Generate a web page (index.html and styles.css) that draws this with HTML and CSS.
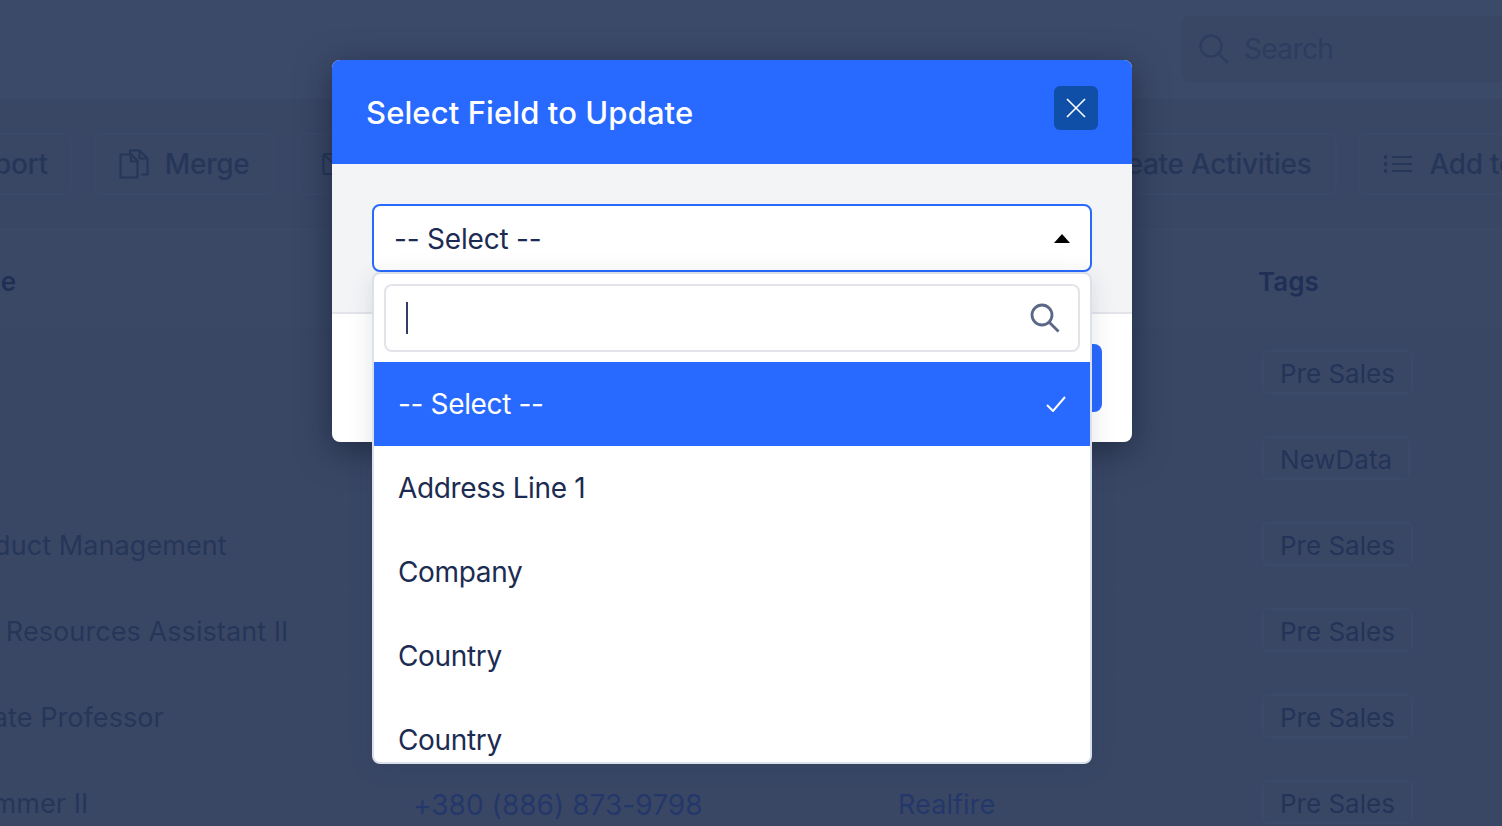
FILE: index.html
```html
<!DOCTYPE html>
<html lang="en">
<head>
  <meta charset="UTF-8">
  <title>Select Field to Update</title>
  <link rel="stylesheet" href="styles.css">
</head>
<body>
  <div class="page">
    <header class="topbar">
      <div class="search-box">
        <svg class="search-icon" viewBox="0 0 30 30"><circle cx="12" cy="12" r="10.5"/><path d="M19.5 19.5l9.5 9.5"/></svg>
        <span>Search</span>
      </div>
    </header>

    <div class="toolbar">
      <div class="tool-group">
        <div class="tool-btn tool-export">Export</div>
        <div class="tool-btn">
          <svg class="tool-icon" viewBox="0 0 30 30"><path d="M1.5 5.5h11l6 6.5v16.500H1.500z"/><path d="M12 5.500v7h6.500"/><path d="M11 5V1.500h9.500l8 8v16h-6"/><path d="M20.500 1.500v8h8"/></svg>
          <span>Merge</span>
        </div>
        <div class="tool-btn">
          <svg class="tool-icon" viewBox="0 0 30 24"><rect x="1.5" y="2" width="27" height="20" rx="2"/><path d="M2 3l13 11L28 3"/></svg>
          <span>Email</span>
        </div>
      </div>
      <div class="tool-group tool-group-right">
        <div class="tool-btn">Create Activities</div>
        <div class="tool-btn">
          <svg class="tool-icon" viewBox="0 0 30 18"><path d="M9 2h20M9 9h20M9 16h20"/><path class="dots" d="M1 2h3M1 9h3M1 16h3"/></svg>
          <span>Add to List</span>
        </div>
      </div>
    </div>

    <div class="table">
      <div class="row row-head">
        <div>Job Title</div><div>Phone</div><div>Company</div><div>Tags</div>
      </div>
      <div class="row">
        <div></div><div></div><div></div><div><span class="tag">Pre Sales</span></div>
      </div>
      <div class="row">
        <div></div><div></div><div></div><div><span class="tag">NewData</span></div>
      </div>
      <div class="row">
        <div>VP Product Management</div><div></div><div></div><div><span class="tag">Pre Sales</span></div>
      </div>
      <div class="row">
        <div>Human Resources Assistant II</div><div></div><div></div><div><span class="tag">Pre Sales</span></div>
      </div>
      <div class="row">
        <div>Associate Professor</div><div></div><div></div><div><span class="tag">Pre Sales</span></div>
      </div>
      <div class="row">
        <div>Programmer II</div><div class="link phone">+380 (886) 873-9798</div><div class="link">Realfire</div><div><span class="tag">Pre Sales</span></div>
      </div>
    </div>
  </div>

  <div class="modal">
    <div class="modal-header">
      <h2>Select Field to Update</h2>
      <button class="close-btn" type="button">
        <svg viewBox="0 0 20 20"><path d="M1 1l18 18M19 1L1 19"/></svg>
      </button>
    </div>
    <div class="modal-body">
      <div class="select-box">
        <span>-- Select --</span>
        <i class="caret-up"></i>
      </div>
    </div>
    <div class="modal-footer">
      <button class="update-btn" type="button">Update</button>
    </div>

    <div class="dropdown">
      <div class="dropdown-search">
        <i class="text-cursor"></i>
        <svg viewBox="0 0 30 30"><circle cx="12" cy="12" r="10"/><path d="M19.5 19.5l9 9"/></svg>
      </div>
      <ul class="options">
        <li class="selected">
          <span>-- Select --</span>
          <svg viewBox="0 0 20 16"><path d="M1 9l6 6L19 1"/></svg>
        </li>
        <li>Address Line 1</li>
        <li>Company</li>
        <li>Country</li>
        <li>Country</li>
      </ul>
    </div>
  </div>
</body>
</html>
```

FILE: styles.css
```css
* {
  box-sizing: border-box;
}
html, body {
  height: 100%;
}
body {
  margin: 0;
  overflow: hidden;
  font-family: Inter, "Liberation Sans", sans-serif;
  background-color: #394765;
  color: #243358;
}
.page {
  height: 826px;
  overflow: hidden;
}

/* background page, dimmed */
.topbar {
  height: 101px;
  padding: 16px 0 0 1182px;
  background: #3c4a69;
  border-bottom: 2px solid #394765;
}
.search-box {
  display: flex;
  align-items: center;
  width: 340px;
  height: 66px;
  padding: 0 0 0 17px;
  border-radius: 8px;
  background: #394765;
  color: #2d3c5f;
  font-size: 28px;
  letter-spacing: -0.6px;
}
.search-icon {
  width: 30px;
  height: 30px;
  margin-right: 15px;
  fill: none;
  stroke: #2d3c5f;
  stroke-width: 2.4;
}
.toolbar {
  display: flex;
  justify-content: space-between;
  height: 129px;
  padding-top: 32px;
  background: #394765;
  border-bottom: 2px solid #3b4967;
}
.tool-group {
  display: flex;
  gap: 22px;
  margin-left: -64px;
}
.tool-group-right {
  gap: 21px;
  margin-left: 0;
  margin-right: -93px;
}
.tool-btn {
  display: flex;
  align-items: center;
  height: 62px;
  padding: 0 24px;
  border: 2px solid #3b4968;
  border-radius: 8px;
  font-size: 28px;
  font-weight: 500;
  letter-spacing: -0.3px;
  color: #263659;
  white-space: nowrap;
}
.tool-export {
  padding-right: 22px;
}
.tool-icon {
  width: 30px;
  height: 30px;
  margin: 0 16px 0 -1px;
  fill: none;
  stroke: #263659;
  stroke-width: 2.1;
}
.tool-icon .dots {
  stroke-width: 3.4;
}
.table {
  background: #394765;
}
.row {
  display: grid;
  grid-template-columns: 505px 486px 364px 1fr;
  align-items: center;
  height: 86px;
  margin-left: -93px;
  border-bottom: 2px solid #3a4866;
  font-size: 27px;
  letter-spacing: 0.08px;
  color: #263659;
  white-space: nowrap;
}
.row-head {
  height: 101px;
  padding-top: 4px;
  background: #3a4866;
  border-bottom: 2px solid #384664;
  font-size: 26px;
  font-weight: 600;
  letter-spacing: 0;
  color: #1f2f55;
}
.row-head > div:last-child {
  margin-left: -4px;
}
.row > .link {
  padding-top: 2px;
  color: #24376a;
}
.row > .phone {
  padding: 4px 0 0 1px;
  font-size: 28px;
  letter-spacing: 0.05px;
}
.tag {
  display: inline-block;
  height: 44px;
  margin-bottom: 2px;
  padding: 0 16px;
  border: 2px solid #3c4a69;
  border-radius: 6px;
  line-height: 44px;
  font-size: 26px;
  letter-spacing: 0;
  color: #243358;
}

/* dialog */
.modal {
  position: absolute;
  top: 60px;
  left: 332px;
  width: 800px;
  height: 382px;
  border-radius: 8px;
  background: #fff;
  box-shadow: 0 8px 34px rgba(15, 23, 42, 0.55);
}
.modal-header {
  display: flex;
  align-items: center;
  justify-content: space-between;
  height: 104px;
  padding: 0 34px;
  background: #2869ff;
  border-radius: 8px 8px 0 0;
}
.modal-header h2 {
  margin: 0;
  font-size: 31px;
  font-weight: 500;
  letter-spacing: 0.1px;
  color: #fff;
}
.close-btn {
  display: flex;
  align-items: center;
  justify-content: center;
  width: 44px;
  height: 44px;
  margin-bottom: 8px;
  padding: 0;
  border: none;
  border-radius: 6px;
  background: #0f4fa8;
}
.close-btn svg {
  width: 20px;
  height: 20px;
  fill: none;
  stroke: #fff;
  stroke-width: 1.6;
}
.modal-body {
  height: 150px;
  padding: 40px 40px 0;
  background: #f3f4f6;
  border-bottom: 2px solid #e2e4ea;
}
.select-box {
  display: flex;
  align-items: center;
  justify-content: space-between;
  height: 68px;
  padding: 1px 20px 0;
  background: #fff;
  border: 2px solid #2869ff;
  border-radius: 8px;
  font-size: 28px;
  letter-spacing: -0.2px;
  color: #1c2b52;
}
.caret-up {
  width: 0;
  height: 0;
  margin-bottom: 1px;
  border-left: 8px solid transparent;
  border-right: 8px solid transparent;
  border-bottom: 9px solid #000;
}
.modal-footer {
  display: flex;
  justify-content: flex-end;
  padding: 30px 30px 0;
}
.update-btn {
  width: 150px;
  height: 68px;
  border: none;
  border-radius: 8px;
  background: #2869ff;
  color: #fff;
  font: 500 28px Inter, sans-serif;
}
.dropdown {
  position: absolute;
  top: 212px;
  left: 40px;
  width: 720px;
  height: 492px;
  overflow: hidden;
  background: #fff;
  border: 2px solid #dbe1ea;
  border-radius: 8px;
  box-shadow: 0 4px 24px rgba(30, 41, 70, 0.12);
}
.dropdown-search {
  display: flex;
  align-items: center;
  justify-content: space-between;
  height: 68px;
  margin: 10px;
  padding: 0 18px 0 20px;
  border: 2px solid #e2e4ea;
  border-radius: 8px;
}
.dropdown-search svg {
  width: 30px;
  height: 30px;
  fill: none;
  stroke: #5a6785;
  stroke-width: 2.8;
}
.text-cursor {
  width: 2px;
  height: 32px;
  background: #2f3f66;
}
.options {
  margin: 0;
  padding: 0;
  list-style: none;
}
.options li {
  display: flex;
  align-items: center;
  justify-content: space-between;
  height: 84px;
  padding: 0 24px;
  font-size: 28px;
  letter-spacing: -0.35px;
  color: #1c2b52;
}
.options li.selected {
  background: #2869ff;
  color: #fff;
}
.options li svg {
  width: 20px;
  height: 16px;
  fill: none;
  stroke: #fff;
  stroke-width: 2;
}
```
